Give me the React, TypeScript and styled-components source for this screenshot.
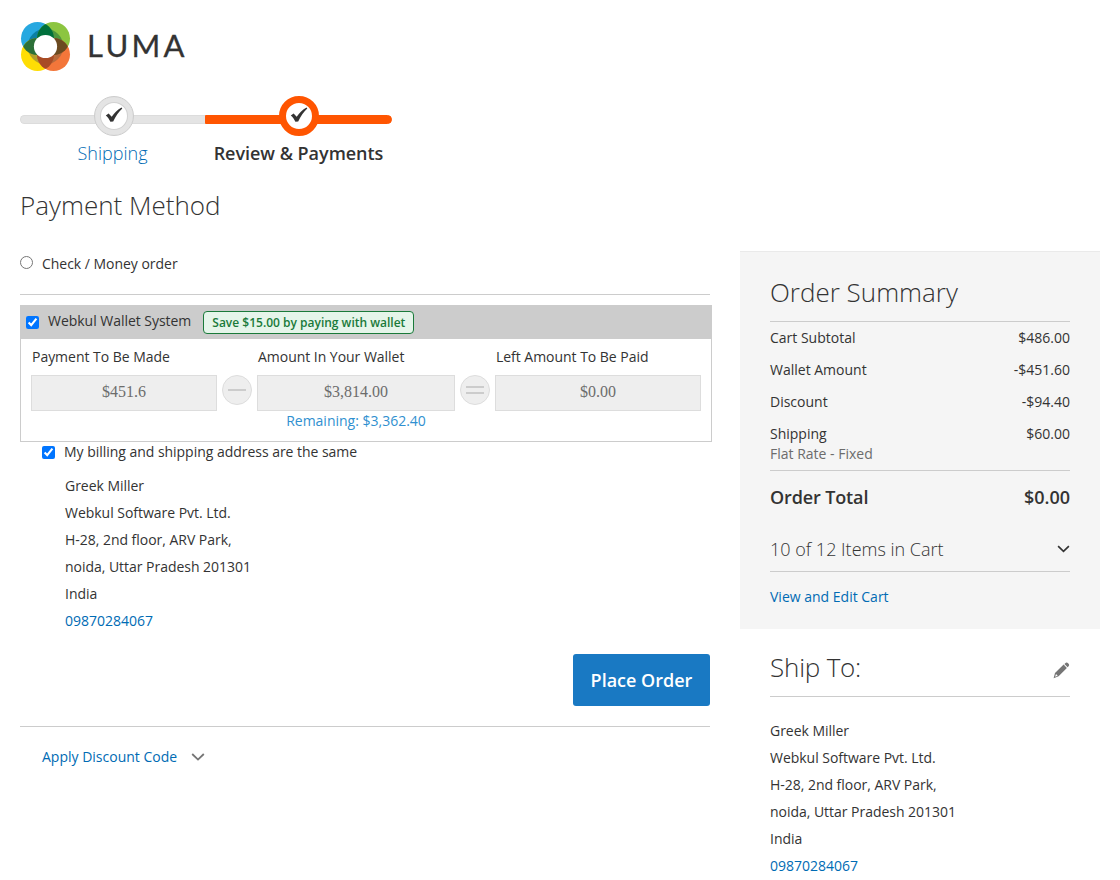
import styled, { createGlobalStyle } from 'styled-components';

const totals = [
  { label: 'Cart Subtotal', value: '$486.00' },
  { label: 'Wallet Amount', value: '-$451.60' },
  { label: 'Discount', value: '-$94.40' },
  { label: 'Shipping', value: '$60.00', note: 'Flat Rate - Fixed' },
];

const LumaMark = () => (
  <svg width="51" height="51" viewBox="0 0 51 51">
    <defs>
      <clipPath id="blue"><circle cx="17.5" cy="17.5" r="16.5" /></clipPath>
      <clipPath id="green"><circle cx="33.5" cy="17.5" r="16.5" /></clipPath>
      <clipPath id="yellow"><circle cx="17.5" cy="33.5" r="16.5" /></clipPath>
      <clipPath id="ring"><circle cx="25.5" cy="25.5" r="17.8" /></clipPath>
    </defs>
    <circle cx="17.5" cy="17.5" r="16.5" fill="#27a8e0" />
    <circle cx="33.5" cy="17.5" r="16.5" fill="#8cc540" />
    <circle cx="17.5" cy="33.5" r="16.5" fill="#fedd05" />
    <circle cx="33.5" cy="33.5" r="16.5" fill="#f3763a" />
    <g clipPath="url(#ring)">
      <circle cx="17.5" cy="17.5" r="16.5" fill="#0c7fa4" />
      <circle cx="33.5" cy="17.5" r="16.5" fill="#4e963c" />
      <circle cx="17.5" cy="33.5" r="16.5" fill="#b3a02a" />
      <circle cx="33.5" cy="33.5" r="16.5" fill="#b76a3c" />
    </g>
    <g clipPath="url(#blue)">
      <circle cx="33.5" cy="17.5" r="16.5" fill="#00703c" />
      <circle cx="17.5" cy="33.5" r="16.5" fill="#2c7038" />
    </g>
    <g clipPath="url(#green)">
      <circle cx="33.5" cy="33.5" r="16.5" fill="#6b4a20" />
    </g>
    <g clipPath="url(#yellow)">
      <circle cx="33.5" cy="33.5" r="16.5" fill="#a84c26" />
    </g>
    <circle cx="25.5" cy="25.5" r="11.6" fill="#fff" />
  </svg>
);

const CheckIcon = () => (
  <svg width="18" height="18" viewBox="0 0 18 18">
    <path d="M0.8 8.6 L3.6 6.6 L6.7 9.8 C9.4 6 12.5 2.7 16.6 0.6 L17.3 1.5 C13.6 5 10.7 9.2 8.2 14.4 L5.4 14.7 C4.2 12.4 2.8 10.3 0.8 8.6Z" fill="#333" />
  </svg>
);

const ChevronIcon = ({ color, width = 14 }: { color: string; width?: number }) => (
  <svg width={width} height="8" viewBox="0 0 14 8" fill="none" stroke={color} strokeWidth="1.8">
    <path d="M1.2 1 L7 6.6 L12.8 1" />
  </svg>
);

const PencilIcon = () => (
  <svg width="17" height="17" viewBox="0 0 17 17" fill="#757575">
    <path d="M11.4 1.9 L12.9 0.8 Q13.9 0.1 14.8 0.9 L15.8 2.1 Q16.5 3.1 15.8 3.9 L14.6 5.3Z" />
    <path fillRule="evenodd" d="M10.6 2.5 L13.9 6.1 L5.6 14.2 L0.6 16.2 L2 11Z M3 12 L2.1 14.7 L4.7 13.8Z" />
  </svg>
);

const AddressBlock = () => (
  <Address>
    <span>Greek Miller</span>
    <span>Webkul Software Pvt. Ltd.</span>
    <span>H-28, 2nd floor, ARV Park,</span>
    <span>noida, Uttar Pradesh 201301</span>
    <span>India</span>
    <Link>09870284067</Link>
  </Address>
);

const App = () => {
  return (
    <Page>
      <GlobalStyle />
      <Logo>
        <LumaMark />
        <Brand>LUMA</Brand>
      </Logo>
      <Progress>
        <Step $width={185}>
          <StepBar>
            <Track />
            <StepCircle><CheckIcon /></StepCircle>
          </StepBar>
          <StepLabel>Shipping</StepLabel>
        </Step>
        <Step $width={187}>
          <StepBar>
            <Track $active />
            <StepCircle $active><CheckIcon /></StepCircle>
          </StepBar>
          <StepLabel $active>Review &amp; Payments</StepLabel>
        </Step>
      </Progress>
      <Columns>
        <Main>
          <Title>Payment Method</Title>
          <Method>
            <Radio type="radio" />
            <span>Check / Money order</span>
          </Method>
          <Wallet>
            <WalletHeader>
              <Checkbox type="checkbox" defaultChecked />
              <WalletName>Webkul Wallet System</WalletName>
              <Badge>Save $15.00 by paying with wallet</Badge>
            </WalletHeader>
            <WalletBody>
              <Field $width={186}>
                <FieldLabel>Payment To Be Made</FieldLabel>
                <Amount>$451.6</Amount>
              </Field>
              <Operator><Dash /></Operator>
              <Field $width={198}>
                <FieldLabel>Amount In Your Wallet</FieldLabel>
                <Amount>$3,814.00</Amount>
                <Remaining>Remaining: $3,362.40</Remaining>
              </Field>
              <Operator><Dash /><Dash /></Operator>
              <Field $width={206}>
                <FieldLabel>Left Amount To Be Paid</FieldLabel>
                <Amount>$0.00</Amount>
              </Field>
            </WalletBody>
          </Wallet>
          <Billing>
            <BillingCheck>
              <Checkbox type="checkbox" defaultChecked />
              <span>My billing and shipping address are the same</span>
            </BillingCheck>
            <BillingAddress>
              <AddressBlock />
            </BillingAddress>
          </Billing>
          <Actions>
            <PlaceOrder>Place Order</PlaceOrder>
          </Actions>
          <Discount>
            <Link>Apply Discount Code</Link>
            <ChevronIcon color="#757575" />
          </Discount>
        </Main>
        <Sidebar>
          <Summary>
            <SideTitle>Order Summary</SideTitle>
            <Totals>
              {totals.map((item) => (
                <TotalRow key={item.label}>
                  <div>
                    {item.label}
                    {item.note && <Note>{item.note}</Note>}
                  </div>
                  <span>{item.value}</span>
                </TotalRow>
              ))}
            </Totals>
            <GrandTotal>
              <GrandLabel>Order Total</GrandLabel>
              <span>$0.00</span>
            </GrandTotal>
            <CartItems>
              <span>10 of 12 Items in Cart</span>
              <ChevronIcon color="#333" width={13} />
            </CartItems>
            <Link>View and Edit Cart</Link>
          </Summary>
          <ShipTo>
            <ShipHeader>
              <SideTitle $tight>Ship To:</SideTitle>
              <PencilIcon />
            </ShipHeader>
            <AddressBlock />
          </ShipTo>
        </Sidebar>
      </Columns>
    </Page>
  );
};

export default App;

const GlobalStyle = createGlobalStyle`
  * {
    box-sizing: border-box;
  }
  body {
    margin: 0;
    background: #fff;
    overflow: hidden;
  }
  svg {
    display: block;
    flex: none;
  }
`;

const Page = styled.div`
  width: 1120px;
  height: 880px;
  padding: 21px 20px 0;
  overflow: hidden;
  font-family: 'Open Sans', 'Noto Sans', sans-serif;
  font-size: 14px;
  line-height: 20px;
  color: #333;
`;
const Logo = styled.div`
  display: flex;
  align-items: center;
  gap: 16px;
  height: 51px;
`;
const Brand = styled.span`
  margin-top: -2px;
  font-family: Lato, sans-serif;
  font-size: 31px;
  line-height: 49px;
  letter-spacing: 3.3px;
  color: #333;
  -webkit-text-stroke: 0.3px #333;
`;
const Progress = styled.div`
  display: flex;
  margin-top: 24px;
`;
const Step = styled.div<{ $width: number }>`
  display: flex;
  flex-direction: column;
  align-items: center;
  width: ${({ $width }) => $width}px;
`;
const StepBar = styled.div`
  display: grid;
  align-items: center;
  width: 100%;
  height: 40px;
`;
const Track = styled.div<{ $active?: boolean }>`
  grid-area: 1 / 1;
  height: 9px;
  margin-top: 7px;
  border: 1px solid ${({ $active }) => ($active ? '#ff5501' : '#dcdcdc')};
  border-right-width: ${({ $active }) => ($active ? 1 : 0)}px;
  border-radius: ${({ $active }) => ($active ? '0 5px 5px 0' : '5px 0 0 5px')};
  background: ${({ $active }) => ($active ? '#ff5501' : '#e4e4e4')};
`;
const StepCircle = styled.div<{ $active?: boolean }>`
  grid-area: 1 / 1;
  justify-self: center;
  display: flex;
  justify-content: center;
  align-items: center;
  width: 40px;
  height: 40px;
  margin-left: ${({ $active }) => ($active ? 1 : 3)}px;
  border: ${({ $active }) => ($active ? '7px solid #ff5501' : '1px solid #ccc')};
  border-radius: 50%;
  background: #fff;
  box-shadow: ${({ $active }) => ($active ? 'none' : 'inset 0 0 0 5px #e4e4e4, inset 0 0 0 6px #d2d2d2')};
`;
const StepLabel = styled.span<{ $active?: boolean }>`
  margin-top: 5px;
  font-size: 18px;
  line-height: 24px;
  font-weight: ${({ $active }) => ($active ? 600 : 300)};
  letter-spacing: ${({ $active }) => ($active ? '-0.03px' : 'normal')};
  color: ${({ $active }) => ($active ? '#333' : '#006bb4')};
`;
const Columns = styled.div`
  display: flex;
  justify-content: space-between;
`;
const Main = styled.div`
  width: 692px;
  letter-spacing: -0.03px;
`;
const Title = styled.h1`
  margin: 22px 0 0;
  font-size: 26px;
  line-height: 36px;
  font-weight: 300;
  letter-spacing: normal;
`;
const Method = styled.div`
  display: flex;
  gap: 9px;
  width: 690px;
  height: 72px;
  padding-top: 31px;
  border-bottom: 1px solid #ccc;
`;
const Radio = styled.input`
  width: 13px;
  height: 13px;
  margin: 2px 0 0;
`;
const Checkbox = styled.input`
  width: 13px;
  height: 13px;
  margin: 0;
  flex: none;
`;
const Wallet = styled.div`
  margin-top: 10px;
  border: 1px solid #ccc;
`;
const WalletHeader = styled.div`
  display: flex;
  align-items: center;
  height: 33px;
  padding-left: 5px;
  background: #ccc;
`;
const WalletName = styled.span`
  margin: -3px 12px 0 9px;
`;
const Badge = styled.span`
  height: 23px;
  padding: 0 8px;
  border: 1px solid #1a7a3a;
  border-radius: 4px;
  background: #e5f5ea;
  color: #1a7a3a;
  font-size: 12px;
  font-weight: 600;
  line-height: 21px;
  letter-spacing: normal;
`;
const WalletBody = styled.div`
  display: flex;
  gap: 5px;
  height: 102px;
  padding: 8px 10px 0;
`;
const Field = styled.div<{ $width: number }>`
  display: flex;
  flex-direction: column;
  width: ${({ $width }) => $width}px;
`;
const FieldLabel = styled.span`
  padding-left: 1px;
`;
const Amount = styled.div`
  height: 36px;
  margin-top: 8px;
  border: 1px solid #ddd;
  background: #eee;
  color: #6c6c6c;
  font-family: 'Liberation Serif', serif;
  font-size: 16px;
  line-height: 32px;
  letter-spacing: normal;
  text-align: center;
`;
const Remaining = styled.span`
  color: #3090d0;
  letter-spacing: normal;
  text-align: center;
`;
const Operator = styled.div`
  display: flex;
  flex-direction: column;
  justify-content: center;
  align-items: center;
  gap: 4px;
  width: 30px;
  height: 30px;
  margin-top: 28px;
  border: 1px solid #ddd;
  border-radius: 50%;
  background: #eee;
`;
const Dash = styled.span`
  width: 18px;
  height: 2px;
  background: #ccc;
`;
const Billing = styled.div`
  padding-left: 22px;
`;
const BillingCheck = styled.label`
  display: flex;
  align-items: center;
  gap: 9px;
`;
const BillingAddress = styled.div`
  padding: 10px 0 0 23px;
`;
const Address = styled.div`
  display: flex;
  flex-direction: column;
  line-height: 27px;
  letter-spacing: -0.03px;
`;
const Link = styled.a`
  color: #006bb4;
  letter-spacing: normal;
`;
const Actions = styled.div`
  display: flex;
  justify-content: flex-end;
  width: 690px;
  height: 93px;
  padding-top: 20px;
  border-bottom: 1px solid #ccc;
`;
const PlaceOrder = styled.button`
  width: 137px;
  height: 52px;
  padding: 0;
  border: 0;
  border-radius: 3px;
  background: #1979c3;
  color: #fff;
  font-family: inherit;
  font-size: 18px;
  font-weight: 600;
`;
const Discount = styled.div`
  display: flex;
  align-items: center;
  gap: 14px;
  padding: 20px 22px;
`;
const Sidebar = styled.aside`
  width: 360px;
  padding-top: 86px;
`;
const Summary = styled.div`
  height: 378px;
  padding: 22px 30px 0;
  border-top: 1px solid #eaeaea;
  background: #f5f5f5;
`;
const SideTitle = styled.h2<{ $tight?: boolean }>`
  margin: 0;
  font-size: 26px;
  line-height: 36px;
  font-weight: 300;
  letter-spacing: ${({ $tight }) => ($tight ? '-0.2px' : 'normal')};
`;
const Totals = styled.div`
  display: flex;
  flex-direction: column;
  gap: 12px;
  height: 150px;
  margin-top: 11px;
  padding-top: 6px;
  border-top: 1px solid #ccc;
  border-bottom: 1px solid #ccc;
`;
const TotalRow = styled.div`
  display: flex;
  justify-content: space-between;
`;
const Note = styled.div`
  color: #6c6c6c;
`;
const GrandTotal = styled.div`
  display: flex;
  justify-content: space-between;
  margin-top: 14px;
  font-size: 18px;
  line-height: 24px;
  font-weight: 600;
`;
const GrandLabel = styled.span`
  letter-spacing: -0.13px;
`;
const CartItems = styled.div`
  display: flex;
  justify-content: space-between;
  align-items: center;
  height: 63px;
  margin-bottom: 15px;
  padding-top: 18px;
  border-bottom: 1px solid #ccc;
  font-size: 18px;
  font-weight: 300;
`;
const ShipTo = styled.div`
  padding: 20px 30px 0;
`;
const ShipHeader = styled.div`
  display: flex;
  justify-content: space-between;
  height: 48px;
  margin-bottom: 20px;
  border-bottom: 1px solid #ccc;

  svg {
    margin-top: 13px;
  }
`;
